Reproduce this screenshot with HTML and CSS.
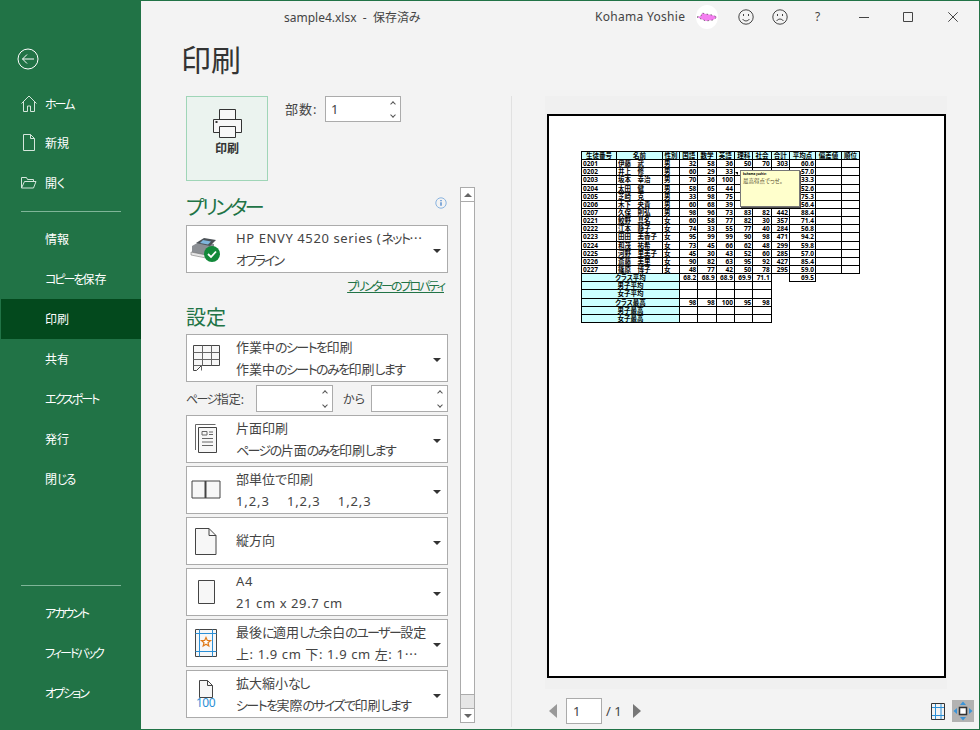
FILE: index.html
```html
<!DOCTYPE html>
<html lang="ja">
<head>
  <meta charset="UTF-8">
  <title>sample4.xlsx - 印刷</title>
  <link rel="stylesheet" href="styles.css">
</head>
<body>
<div class="window">

  <!-- 左メニュー -->
  <nav class="side">
    <div class="back">
      <svg width="22" height="22" viewBox="0 0 22 22" fill="none" stroke="#fff" stroke-width="1"><circle cx="11" cy="11" r="10"/><path d="M5.5 11H17M10 6.5L5.5 11l4.500 4.500"/></svg>
    </div>
    <a class="nav-item">
      <svg class="nav-icon" width="16" height="17" viewBox="0 0 16 17" fill="none" stroke="#d5e6dc"><path d="M.5 8.500L8 1l7.500 7.500M2.500 7v9.500h4V11h3v5.500h4V7"/></svg>
      <span class="kn2">ホーム</span></a>
    <a class="nav-item">
      <svg class="nav-icon" width="16" height="17" viewBox="0 0 16 17" fill="none" stroke="#d5e6dc"><path d="M2.500.5h7l4 4v12h-11zM9.500.5v4h4"/></svg>
      新規</a>
    <a class="nav-item">
      <svg class="nav-icon" width="16" height="17" viewBox="0 0 16 17" fill="none" stroke="#d5e6dc"><path d="M.5 14V3.500h5l1 2h6v2M.5 14l3-6.500h11.500L12.500 14z"/></svg>
      開く</a>
    <hr class="nav-line">
    <a class="nav-item">情報</a>
    <a class="nav-item"><span><span class="kn2">コピーを</span>保存</span></a>
    <a class="nav-item active">印刷</a>
    <a class="nav-item">共有</a>
    <a class="nav-item"><span class="kn2">エクスポート</span></a>
    <a class="nav-item">発行</a>
    <a class="nav-item"><span><span>閉</span><span class="kn2">じる</span></span></a>
    <div class="nav-space"></div>
    <hr class="nav-line">
    <a class="nav-item"><span class="kn2">アカウント</span></a>
    <a class="nav-item"><span class="kn2">フィードバック</span></a>
    <a class="nav-item"><span class="kn2">オプション</span></a>
  </nav>

  <div class="main">

    <!-- タイトルバー -->
    <header class="titlebar">
      <span class="doc-name">sample4.xlsx&nbsp; -&nbsp; 保存済み</span>
      <span class="user">Kohama Yoshie</span>
      <span class="avatar">
        <svg width="22" height="10" viewBox="0 0 22 10"><path d="M1 5l4-1 1-3 4 1 6 1 5 2-4 3-7 1-5-2z" fill="#f47ef0" stroke="#333" stroke-width=".6" stroke-dasharray="1.500 2.500"/></svg>
      </span>
      <svg class="tb-face" width="16" height="16" viewBox="0 0 16 16" fill="none" stroke="#444"><circle cx="8" cy="8" r="7.200"/><path d="M5.500 5v2M10.500 5v2M4.500 10c2 2.600 5 2.600 7 0"/></svg>
      <svg class="tb-face tb-sad" width="16" height="16" viewBox="0 0 16 16" fill="none" stroke="#444"><circle cx="8" cy="8" r="7.200"/><path d="M5.500 5v2M10.500 5v2M4.500 12c2-2.600 5-2.600 7 0"/></svg>
      <span class="tb-help">?</span>
      <svg class="tb-min" width="10" height="10" viewBox="0 0 10 10" stroke="#444"><path d="M0 5.500h10"/></svg>
      <svg class="tb-max" width="10" height="10" viewBox="0 0 10 10" fill="none" stroke="#444"><path d="M.5.5h9v9h-9z"/></svg>
      <svg class="tb-close" width="10" height="10" viewBox="0 0 10 10" stroke="#444"><path d="M.3.3l9.400 9.400M9.700.3L.3 9.700"/></svg>
    </header>

    <h1 class="page-title">印刷</h1>

    <div class="backstage">

      <!-- 設定パネル -->
      <section class="panel">
        <div class="print-row">
          <button class="print-btn">
            <svg width="30" height="30" viewBox="0 0 30 30" fill="#f7f7f7" stroke="#333"><path d="M7.500.5h16v11h-16z"/><path d="M1.500 10.500h28v13h-28z"/><path d="M7.500 17.500h16v11h-16z"/><path d="M3.500 13h2" stroke-width="2"/></svg>
            <span>印刷</span>
          </button>
          <label class="copies-label">部数:</label>
          <div class="spin copies"><span class="spin-val">1</span><span class="spin-btns"><i class="up"></i><i class="down"></i></span></div>
        </div>

        <h2 class="sec-title printer-title"><span class="kn-title">プリンター</span>
          <svg width="12" height="12" viewBox="0 0 12 12" fill="none"><circle cx="6" cy="6" r="5.200" stroke="#8ab4e0"/><path d="M6 5.200v3.600" stroke="#3a7bc8" stroke-width="1.200"/><path d="M6 3v1.200" stroke="#3a7bc8" stroke-width="1.200"/></svg>
        </h2>
        <div class="card">
          <span class="card-icon">
            <svg width="32" height="28" viewBox="0 0 32 28"><path d="M2 11l7-4 15 2v8l-6 5-16-3z" fill="#8b8f94"/><path d="M6 8l8-5 12 2-6 6z" fill="#4d5358"/><path d="M13 5l8 1.500-3 3-8-1.500z" fill="#7fb6dc"/><path d="M1 17l15 3v3L1 20z" fill="#e6e6e6" stroke="#666" stroke-width=".5"/><circle cx="22" cy="19" r="8" fill="#12893a"/><path d="M18 19l3 3 5-5.500" fill="none" stroke="#fff" stroke-width="1.800"/></svg>
          </span>
          <span class="card-text"><b class="lat">HP ENVY 4520 series (<span class="kn">ネット</span>⋯</b><b><span class="kn2">オフライン</span></b></span>
          <i class="caret"></i>
        </div>
        <a class="prop-link"><span class="kn2">プリンターのプロパティ</span></a>

        <h2 class="sec-title setting-title">設定</h2>
        <div class="card">
          <span class="card-icon">
            <svg width="30" height="28" viewBox="0 0 30 28" fill="#f7f7f7" stroke="#444"><path d="M2.500 1.500h26v20h-18l-5 5h-3z"/><path d="M2.500 8.500h26M2.500 15.500h26M11.500 1.500v20M20.500 1.500v20M2.500 21.500h8v5" fill="none" stroke="#666"/></svg>
          </span>
          <span class="card-text"><b>作業中<span class="kn">のシートを</span>印刷</b><b>作業中<span class="kn">のシートのみを</span>印刷<span class="kn">します</span></b></span>
          <i class="caret"></i>
        </div>
        <div class="pages-row">
          <label><span class="kn">ページ</span>指定:</label>
          <div class="spin page-spin"><span class="spin-val"></span><span class="spin-btns"><i class="up"></i><i class="down"></i></span></div>
          <label class="pages-to">から</label>
          <div class="spin page-spin"><span class="spin-val"></span><span class="spin-btns"><i class="up"></i><i class="down"></i></span></div>
        </div>
        <div class="card">
          <span class="card-icon">
            <svg width="24" height="30" viewBox="0 0 24 30" fill="none" stroke="#444"><path d="M1.500 26V.5h20" stroke="#666"/><path d="M4.500 3.500h18v25h-18z" fill="#f7f7f7"/><path d="M8 7.500h5v3.500H8zM8 14.500h11M8 18h11M8 21.500h11M15 8h4M15 10.500h4" stroke="#666"/></svg>
          </span>
          <span class="card-text"><b>片面印刷</b><b><span class="kn">ページの</span>片面<span class="kn">のみを</span>印刷<span class="kn">します</span></b></span>
          <i class="caret"></i>
        </div>
        <div class="card">
          <span class="card-icon">
            <svg width="30" height="20" viewBox="0 0 30 20" fill="#f7f7f7" stroke="#444"><path d="M1 1h28v17H1z"/><path d="M14.500 1v17" stroke-width="2"/></svg>
          </span>
          <span class="card-text"><b>部単位で印刷</b><b class="lat collate">1,2,3&nbsp;&nbsp;&nbsp; 1,2,3&nbsp;&nbsp;&nbsp; 1,2,3</b></span>
          <i class="caret"></i>
        </div>
        <div class="card">
          <span class="card-icon">
            <svg width="24" height="30" viewBox="0 0 24 30" fill="#f7f7f7" stroke="#444"><path d="M1.500 2.500h13.500l7 7v19h-20.500z"/><path d="M15 2.500v7h7" fill="none"/></svg>
          </span>
          <span class="card-text one-line"><b>縦方向</b></span>
          <i class="caret"></i>
        </div>
        <div class="card">
          <span class="card-icon">
            <svg width="18" height="26" viewBox="0 0 18 26" fill="#f7f7f7" stroke="#444"><path d="M1.500 1.500h16v23h-16z"/></svg>
          </span>
          <span class="card-text"><b class="lat">A4</b><b class="lat">21 cm x 29.7 cm</b></span>
          <i class="caret"></i>
        </div>
        <div class="card">
          <span class="card-icon">
            <svg width="24" height="28" viewBox="0 0 24 28" fill="#f7f7f7"><path d="M1.500.5h21v27h-21z" stroke="#444"/><path d="M1.500 4.500h21M1.500 22.500h21M5.500.5v27M18.500.5v27" stroke="#2b8fd6"/><path d="M12 8.500l1.300 3h3.200l-2.500 2.200.8 3.300-2.800-1.800-2.800 1.800.8-3.300-2.500-2.200h3.200z" fill="#fff" stroke="#e07b1a" stroke-width="1.200"/></svg>
          </span>
          <span class="card-text"><b>最後<span class="kn">に</span>適用<span class="kn">した</span>余白<span class="kn">のユーザー</span>設定</b><b class="lat">上: 1.9 cm 下: 1.9 cm 左: 1⋯</b></span>
          <i class="caret"></i>
        </div>
        <div class="card">
          <span class="card-icon scale-icon">
            <svg width="14" height="18" viewBox="0 0 14 18" fill="#f7f7f7" stroke="#444"><path d="M.5.5h8l5 5v12h-13z"/><path d="M8.500.5v5h5" fill="none"/></svg>
            <span>100</span>
          </span>
          <span class="card-text"><b>拡大縮小<span class="kn">なし</span></b><b><span class="kn">シートを</span>実際<span class="kn">のサイズで</span>印刷<span class="kn">します</span></b></span>
          <i class="caret"></i>
        </div>
      </section>

      <!-- スクロールバー -->
      <div class="scrollbar">
        <span class="sb-btn"><i class="sb-up"></i></span>
        <span class="sb-thumb"></span>
        <span class="sb-track"></span>
        <span class="sb-btn"><i class="sb-down"></i></span>
      </div>

      <!-- プレビュー -->
      <section class="preview">
        <div class="sheet-wrap">
          <div class="sheet-page">
            <table class="sheet">
              <colgroup>
                <col class="c-id"><col class="c-name"><col class="c-sex">
                <col class="c-num"><col class="c-num"><col class="c-num"><col class="c-num"><col class="c-num">
                <col class="c-num"><col class="c-wide"><col class="c-wide"><col class="c-last">
              </colgroup>
              <tr class="head"><td>生徒番号</td><td>名前</td><td>性別</td><td>国語</td><td>数学</td><td>英語</td><td>理科</td><td>社会</td><td>合計</td><td>平均点</td><td>偏差値</td><td>順位</td></tr>
              <tr><td class="tl">0201</td><td class="tl">伊藤　武</td><td class="tl">男</td><td>32</td><td>58</td><td>36</td><td>50</td><td>70</td><td>303</td><td>60.6</td><td></td><td></td></tr>
              <tr><td class="tl">0202</td><td class="tl">井上　修</td><td class="tl">男</td><td>60</td><td>29</td><td>33</td><td></td><td></td><td></td><td>57.0</td><td></td><td></td></tr>
              <tr><td class="tl">0203</td><td class="tl">坂本　幸治</td><td class="tl">男</td><td>70</td><td>36</td><td>100</td><td></td><td></td><td></td><td>33.3</td><td></td><td></td></tr>
              <tr><td class="tl">0204</td><td class="tl">太田　健</td><td class="tl">男</td><td>58</td><td>65</td><td>44</td><td></td><td></td><td></td><td>52.6</td><td></td><td></td></tr>
              <tr><td class="tl">0205</td><td class="tl">芝崎　克</td><td class="tl">男</td><td>33</td><td>98</td><td>75</td><td></td><td></td><td></td><td>75.3</td><td></td><td></td></tr>
              <tr><td class="tl">0206</td><td class="tl">木下　央貴</td><td class="tl">男</td><td>60</td><td>68</td><td>39</td><td></td><td></td><td></td><td>56.4</td><td></td><td></td></tr>
              <tr><td class="tl">0207</td><td class="tl">久保　則弘</td><td class="tl">男</td><td>98</td><td>96</td><td>73</td><td>83</td><td>82</td><td>442</td><td>88.4</td><td></td><td></td></tr>
              <tr><td class="tl">0221</td><td class="tl">鮫野　具名</td><td class="tl">女</td><td>60</td><td>58</td><td>77</td><td>82</td><td>30</td><td>357</td><td>71.4</td><td></td><td></td></tr>
              <tr><td class="tl">0222</td><td class="tl">江本　静子</td><td class="tl">女</td><td>74</td><td>33</td><td>55</td><td>77</td><td>40</td><td>284</td><td>56.8</td><td></td><td></td></tr>
              <tr><td class="tl">0223</td><td class="tl">田田　美香子</td><td class="tl">女</td><td>95</td><td>99</td><td>99</td><td>90</td><td>98</td><td>471</td><td>94.2</td><td></td><td></td></tr>
              <tr><td class="tl">0224</td><td class="tl">和茂　祐希</td><td class="tl">女</td><td>73</td><td>45</td><td>66</td><td>62</td><td>48</td><td>299</td><td>59.8</td><td></td><td></td></tr>
              <tr><td class="tl">0225</td><td class="tl">河野　里美子</td><td class="tl">女</td><td>45</td><td>30</td><td>43</td><td>52</td><td>60</td><td>285</td><td>57.0</td><td></td><td></td></tr>
              <tr><td class="tl">0226</td><td class="tl">斎藤　美里</td><td class="tl">女</td><td>90</td><td>82</td><td>63</td><td>95</td><td>92</td><td>427</td><td>85.4</td><td></td><td></td></tr>
              <tr><td class="tl">0227</td><td class="tl">篠原　博子</td><td class="tl">女</td><td>48</td><td>77</td><td>42</td><td>50</td><td>78</td><td>295</td><td>59.0</td><td></td><td></td></tr>
              <tr><td class="sum" colspan="3">クラス平均</td><td>68.2</td><td>68.9</td><td>68.9</td><td>69.9</td><td>71.1</td><td class="none"></td><td>69.5</td><td class="none"></td><td class="none"></td></tr>
              <tr><td class="sum" colspan="3">男子平均</td><td></td><td></td><td></td><td></td><td></td><td class="none" colspan="4"></td></tr>
              <tr><td class="sum" colspan="3">女子平均</td><td></td><td></td><td></td><td></td><td></td><td class="none" colspan="4"></td></tr>
              <tr><td class="sum" colspan="3">クラス最高</td><td>98</td><td>98</td><td>100</td><td>95</td><td>98</td><td class="none" colspan="4"></td></tr>
              <tr><td class="sum" colspan="3">男子最高</td><td></td><td></td><td></td><td></td><td></td><td class="none" colspan="4"></td></tr>
              <tr><td class="sum" colspan="3">女子最高</td><td></td><td></td><td></td><td></td><td></td><td class="none" colspan="4"></td></tr>
            </table>
            <!-- セルのコメント -->
            <div class="comment"><b>kohama yoshie:</b><span>最高得点でっせ。</span></div>
          </div>
        </div>
        <div class="preview-foot">
          <i class="pg-prev"></i>
          <span class="pg-input">1</span>
          <span class="pg-total">/ 1</span>
          <i class="pg-next"></i>
          <span class="foot-space"></span>
          <svg class="view-margin" width="14" height="17" viewBox="0 0 14 17" fill="#f7f7f7"><path d="M4.500 1v15M10 1v15M1 4.500h12M1 12.500h12" stroke="#2b8fd6"/><path d="M.5.5h13v16H.5z" fill="none" stroke="#333"/></svg>
          <span class="view-fit">
            <svg width="22" height="22" viewBox="0 0 22 22"><path d="M7.500 7.500h7v7h-7z" fill="#fff" stroke="#333" stroke-width="1.500"/><path d="M11 1.500l3 3.500H8zM11 20.500l3-3.500H8zM1.500 11L5 8v6zM20.500 11L17 8v6z" fill="#3a94d8"/></svg>
          </span>
        </div>
      </section>
    </div>
  </div>
</div>
</body>
</html>
```
FILE: styles.css
```css
* {
  box-sizing: border-box;
}

html, body {
  margin: 0;
  padding: 0;
  overflow: hidden;
}

body {
  font-family: "Noto Sans", "Noto Sans CJK JP", sans-serif;
  font-feature-settings: "palt";
  font-size: 13px;
  color: #444;
}

/* カナの字幅を詰める */
.kn {
  letter-spacing: -1.6px;
}
.kn2 {
  letter-spacing: -2px;
}
.lat {
  letter-spacing: .6px;
}

.window {
  display: flex;
  width: 980px;
  height: 730px;
  border: 1px solid #217346;
  background: #f3f3f3;
}

/* 左メニュー */
.side {
  display: flex;
  flex-direction: column;
  flex: none;
  width: 140px;
  height: 728px;
  padding: 47px 0 16px;
  background: #217346;
  color: #fff;
}
.back {
  height: 36px;
  padding-left: 16px;
}
.nav-item {
  display: flex;
  align-items: center;
  flex: none;
  height: 40px;
  padding-left: 44px;
  position: relative;
  font-size: 12px;
}
.back + .nav-item {
  height: 39px;
}
.nav-icon {
  position: absolute;
  left: 20px;
  top: 11px;
}
.nav-item.active {
  background: #03491d;
}
.nav-line {
  flex: none;
  width: 100px;
  height: 1px;
  margin: 8px 0 7px 20px;
  border: 0;
  background: #7fb598;
}
.nav-space {
  flex: 1;
}

/* 右側 */
.main {
  flex: 1;
  min-width: 0;
  display: flex;
  flex-direction: column;
}

/* タイトルバー */
.titlebar {
  display: flex;
  align-items: center;
  flex: none;
  height: 31px;
  padding-left: 143px;
  font-size: 12px;
}
.doc-name {
  flex: none;
  width: 311px;
}
.user {
  flex: none;
  width: 101px;
  letter-spacing: .3px;
}
.avatar {
  display: flex;
  align-items: center;
  justify-content: center;
  flex: none;
  width: 22px;
  height: 24px;
  margin-right: 20px;
  border-radius: 50%;
  background: #fff;
}
.tb-face {
  flex: none;
}
.tb-sad {
  margin-left: 18px;
}
.tb-help {
  flex: none;
  margin-left: 27px;
}
.tb-min {
  margin-left: 39px;
}
.tb-max {
  margin-left: 34px;
}
.tb-close {
  margin-left: 35px;
}

.page-title {
  flex: none;
  height: 64px;
  margin: 0;
  padding: 7px 0 0 40px;
  font-size: 30px;
  font-weight: 400;
  line-height: 42px;
  color: #333;
}

.backstage {
  display: flex;
  flex: 1;
  min-height: 0;
}

/* 設定パネル */
.panel {
  flex: none;
  width: 262px;
  margin-left: 45px;
}
.print-row {
  display: flex;
  align-items: flex-start;
  height: 85px;
}
.print-btn {
  display: flex;
  flex-direction: column;
  align-items: center;
  flex: none;
  width: 82px;
  height: 85px;
  padding: 12px 0 0;
  border: 1px solid #9fd5b7;
  background: #ebf3ef;
  font: inherit;
  font-weight: 700;
  font-size: 12px;
  color: #333;
}
.print-btn svg {
  flex: none;
}
.copies-label {
  width: 40px;
  margin: 3px 0 0 17px;
  font-size: 13px;
  letter-spacing: 1px;
}
.spin {
  display: flex;
  height: 27px;
  border: 1px solid #ababab;
  background: #fff;
}
.spin-val {
  flex: 1;
  padding-left: 3px;
  line-height: 25px;
}
.spin-btns {
  display: flex;
  flex-direction: column;
  align-items: center;
  justify-content: space-between;
  width: 14px;
  padding: 5px 0 4px;
}
.spin-btns i {
  display: block;
  width: 4px;
  height: 4px;
  border-left: 1px solid #555;
  border-top: 1px solid #555;
}
.spin-btns .up {
  transform: rotate(45deg);
}
.spin-btns .down {
  transform: rotate(225deg);
}
.copies {
  width: 76px;
  height: 26px;
}
.copies .spin-val {
  padding-left: 5px;
}
.sec-title {
  display: flex;
  justify-content: space-between;
  margin: 0;
  font-size: 20px;
  font-weight: 400;
  color: #217346;
}
.kn-title {
  letter-spacing: -2.800px;
}
.printer-title {
  height: 28px;
  margin-top: 16px;
  line-height: 22px;
}
.printer-title svg {
  margin-right: 1px;
}
.setting-title {
  height: 30px;
  line-height: 28px;
}
.card {
  display: flex;
  align-items: center;
  height: 48px;
  margin-bottom: 3px;
  border: 1px solid #ababab;
  background: #fff;
}
.card-icon {
  display: flex;
  flex-direction: column;
  align-items: center;
  flex: none;
  width: 37px;
  margin-right: 12px;
}
.card-text {
  flex: 1;
  min-width: 0;
  white-space: nowrap;
}
.card-text b {
  display: block;
  font-weight: 400;
  line-height: 22px;
}
.one-line {
  margin-top: -3px;
}
.collate {
  letter-spacing: .9px;
}
.caret {
  flex: none;
  width: 0;
  height: 0;
  margin: 4px 6px 0 0;
  border-left: 4px solid transparent;
  border-right: 4px solid transparent;
  border-top: 4px solid #333;
}
.scale-icon span {
  margin-top: -1px;
  font-size: 12px;
  line-height: 11px;
  color: #2b8fd6;
  letter-spacing: -.5px;
}
.prop-link {
  display: block;
  height: 28px;
  padding-right: 4px;
  text-align: right;
  font-size: 12px;
  line-height: 22px;
  color: #217346;
  text-decoration: underline;
}
.pages-row {
  display: flex;
  align-items: center;
  margin: 1px 0 3px;
  font-size: 12px;
}
.pages-row label {
  flex: none;
  width: 70px;
}
.pages-row .pages-to {
  width: 38px;
  padding-left: 10px;
}
.page-spin {
  width: 77px;
}

/* スクロールバー */
.scrollbar {
  display: flex;
  flex-direction: column;
  flex: none;
  width: 15px;
  height: 536px;
  margin: 91px 0 0 12px;
  border: 1px solid #ababab;
  border-width: 0 1px;
}
.sb-btn {
  display: flex;
  align-items: center;
  justify-content: center;
  flex: none;
  height: 15px;
  border: 1px solid #ababab;
  border-width: 1px 0;
  background: #fff;
}
.sb-thumb {
  flex: 1;
  background: #fff;
}
.sb-track {
  flex: none;
  height: 14px;
  background: #e6e6e6;
  border-top: 1px solid #ababab;
}
.sb-up, .sb-down {
  width: 0;
  height: 0;
  border-left: 4px solid transparent;
  border-right: 4px solid transparent;
}
.sb-up {
  border-bottom: 4px solid #666;
}
.sb-down {
  border-top: 4px solid #666;
}

/* プレビュー */
.preview {
  flex: none;
  width: 464px;
  height: 631px;
  margin-left: 36px;
  padding-left: 33px;
  border-left: 1px solid #e1e1e1;
}
.sheet-wrap {
  width: 402px;
  height: 593px;
  padding: 18px 0 0 2px;
  background: #f0f0f0;
}
.sheet-page {
  position: relative;
  width: 399px;
  height: 564px;
  padding: 35px 0 0 32px;
  border: 2px solid #000;
  background: #fff;
}
.sheet {
  table-layout: fixed;
  width: 278px;
  border-collapse: collapse;
  font-size: 6.500px;
  font-weight: 700;
  line-height: 7px;
  color: #000;
}
.c-id { width: 35px; }
.c-name { width: 46px; }
.c-sex { width: 17px; }
.c-num { width: 18.330px; }
.c-wide { width: 26px; }
.c-last { width: 18px; }
.sheet td {
  height: 8.150px;
  padding: 0 1px;
  border: 1px solid #000;
  text-align: right;
  white-space: nowrap;
  overflow: hidden;
}
.sheet td.tl {
  text-align: left;
}
.sheet .head td {
  background: #ccffff;
  text-align: center;
}
.sheet td.sum {
  background: #ccffff;
  text-align: center;
}
.sheet td.none {
  border: 0;
}
.comment {
  position: absolute;
  left: 191px;
  top: 54px;
  width: 60px;
  height: 37px;
  padding: 1px 2px;
  border: 1px solid #777;
  box-shadow: 1px 1px 0 #555;
  background: #ffffcc;
  color: #5a5030;
}
.comment::before {
  content: "";
  position: absolute;
  left: -6px;
  top: 1px;
  border-top: 3px solid #000;
  border-left: 3px solid transparent;
}
.comment b {
  display: block;
  font-size: 3px;
  line-height: 4px;
  color: #000;
}
.comment span {
  display: block;
  margin-top: 2px;
  font-size: 5.500px;
  line-height: 7px;
}
.preview-foot {
  display: flex;
  align-items: center;
  width: 429px;
  height: 26px;
  margin-top: 9px;
  padding-left: 4px;
}
.pg-prev, .pg-next {
  flex: none;
  width: 0;
  height: 0;
  border-top: 7px solid transparent;
  border-bottom: 7px solid transparent;
}
.pg-prev {
  border-right: 8px solid #999;
}
.pg-next {
  border-left: 8px solid #777;
}
.pg-input {
  flex: none;
  width: 36px;
  height: 26px;
  margin-left: 9px;
  padding-left: 6px;
  border: 1px solid #ababab;
  background: #fff;
  line-height: 24px;
}
.pg-total {
  flex: none;
  width: 31px;
  padding-left: 4px;
}
.foot-space {
  flex: 1;
}
.view-margin {
  margin-right: 7px;
}
.view-fit {
  display: flex;
  align-items: center;
  justify-content: center;
  width: 22px;
  height: 22px;
  background: #b2b2b2;
}
```
